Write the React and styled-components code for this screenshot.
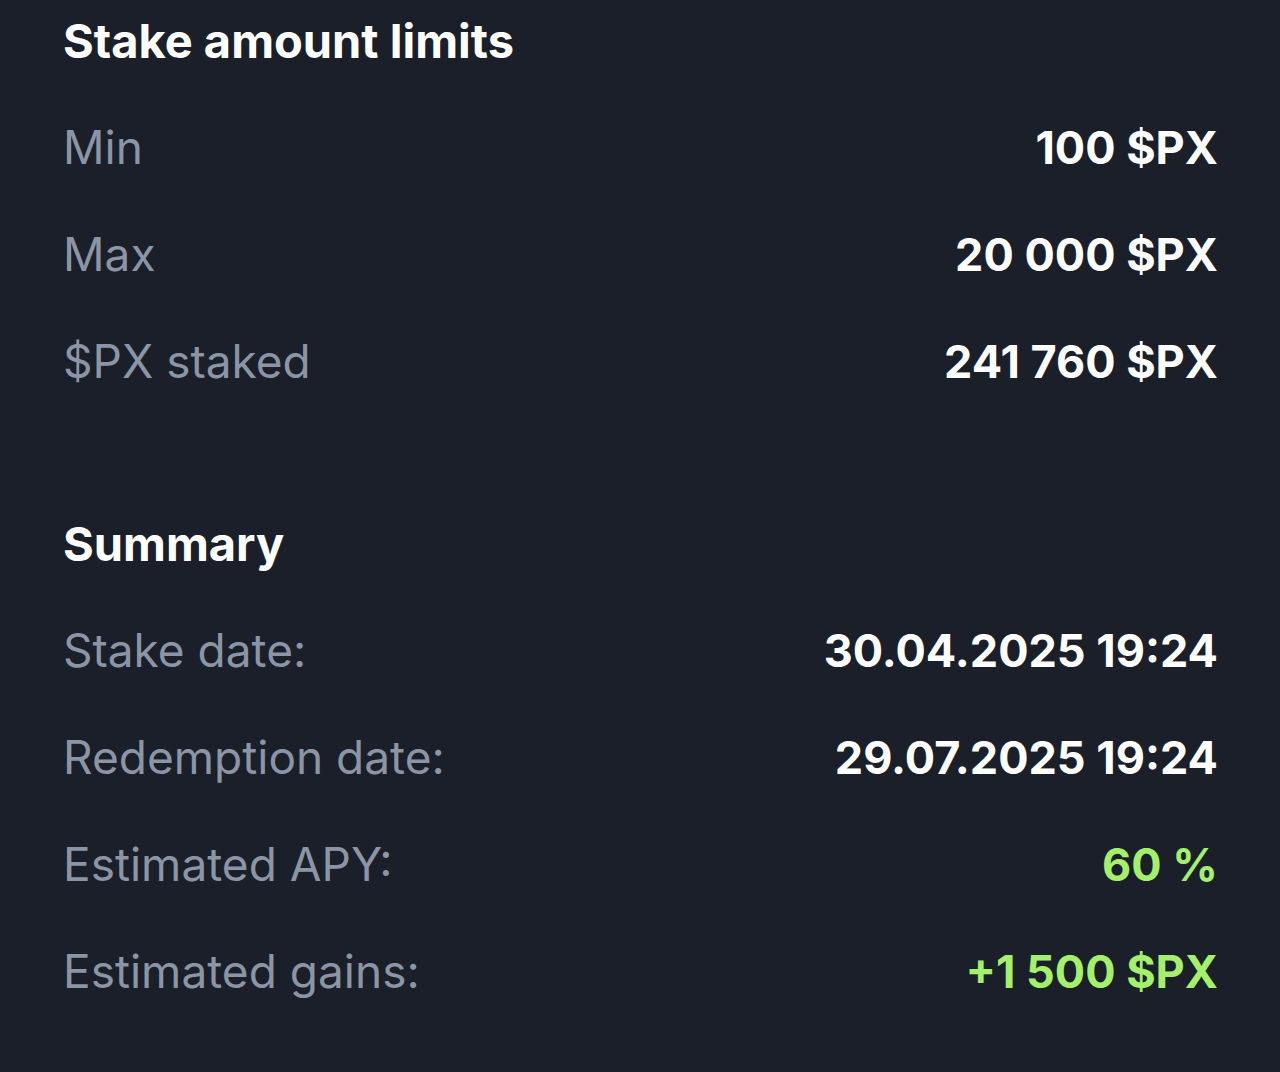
import React from "react";
import styled, { createGlobalStyle } from "styled-components";

const Global = createGlobalStyle`
  html, body { margin: 0; padding: 0; background: #1a1f29; }
  body { font-family: Inter, "Noto Sans", sans-serif; -webkit-font-smoothing: antialiased; }
`;

const Page = styled.div`
  width: 1280px;
  height: 1072px;
  box-sizing: border-box;
  background: #1a1f29;
  padding: 0 62px 0 63px;
  display: flex;
  flex-direction: column;
`;

const Section = styled.section`
  display: flex;
  flex-direction: column;
  margin-top: ${(p) => p.$top || 0}px;
`;

const Heading = styled.h2`
  margin: 0 0 12px;
  font-size: 47px;
  font-weight: 700;
  color: #ffffff;
  line-height: 82px;
`;

const Row = styled.div`
  display: flex;
  justify-content: space-between;
  align-items: baseline;
  line-height: 107px;
`;

const Label = styled.span`
  color: #8b95a5;
  font-weight: 400;
  font-size: 46px;
`;

const Value = styled.span`
  color: ${(p) => (p.$accent ? "#a4f06b" : "#ffffff")};
  font-weight: 700;
  font-size: 45px;
`;

const limits = [
  ["Min", "100 $PX"],
  ["Max", "20 000 $PX"],
  ["$PX staked", "241 760 $PX"],
];

const summary = [
  ["Stake date:", "30.04.2025 19:24"],
  ["Redemption date:", "29.07.2025 19:24"],
  ["Estimated APY:", "60 %", true],
  ["Estimated gains:", "+1 500 $PX", true],
];

export default function App() {
  return (
    <>
      <Global />
      <Page>
        <Section>
          <Heading>Stake amount limits</Heading>
          {limits.map(([l, v]) => (
            <Row key={l}>
              <Label>{l}</Label>
              <Value>{v}</Value>
            </Row>
          ))}
        </Section>
        <Section $top={88}>
          <Heading>Summary</Heading>
          {summary.map(([l, v, a]) => (
            <Row key={l}>
              <Label>{l}</Label>
              <Value $accent={a}>{v}</Value>
            </Row>
          ))}
        </Section>
      </Page>
    </>
  );
}
